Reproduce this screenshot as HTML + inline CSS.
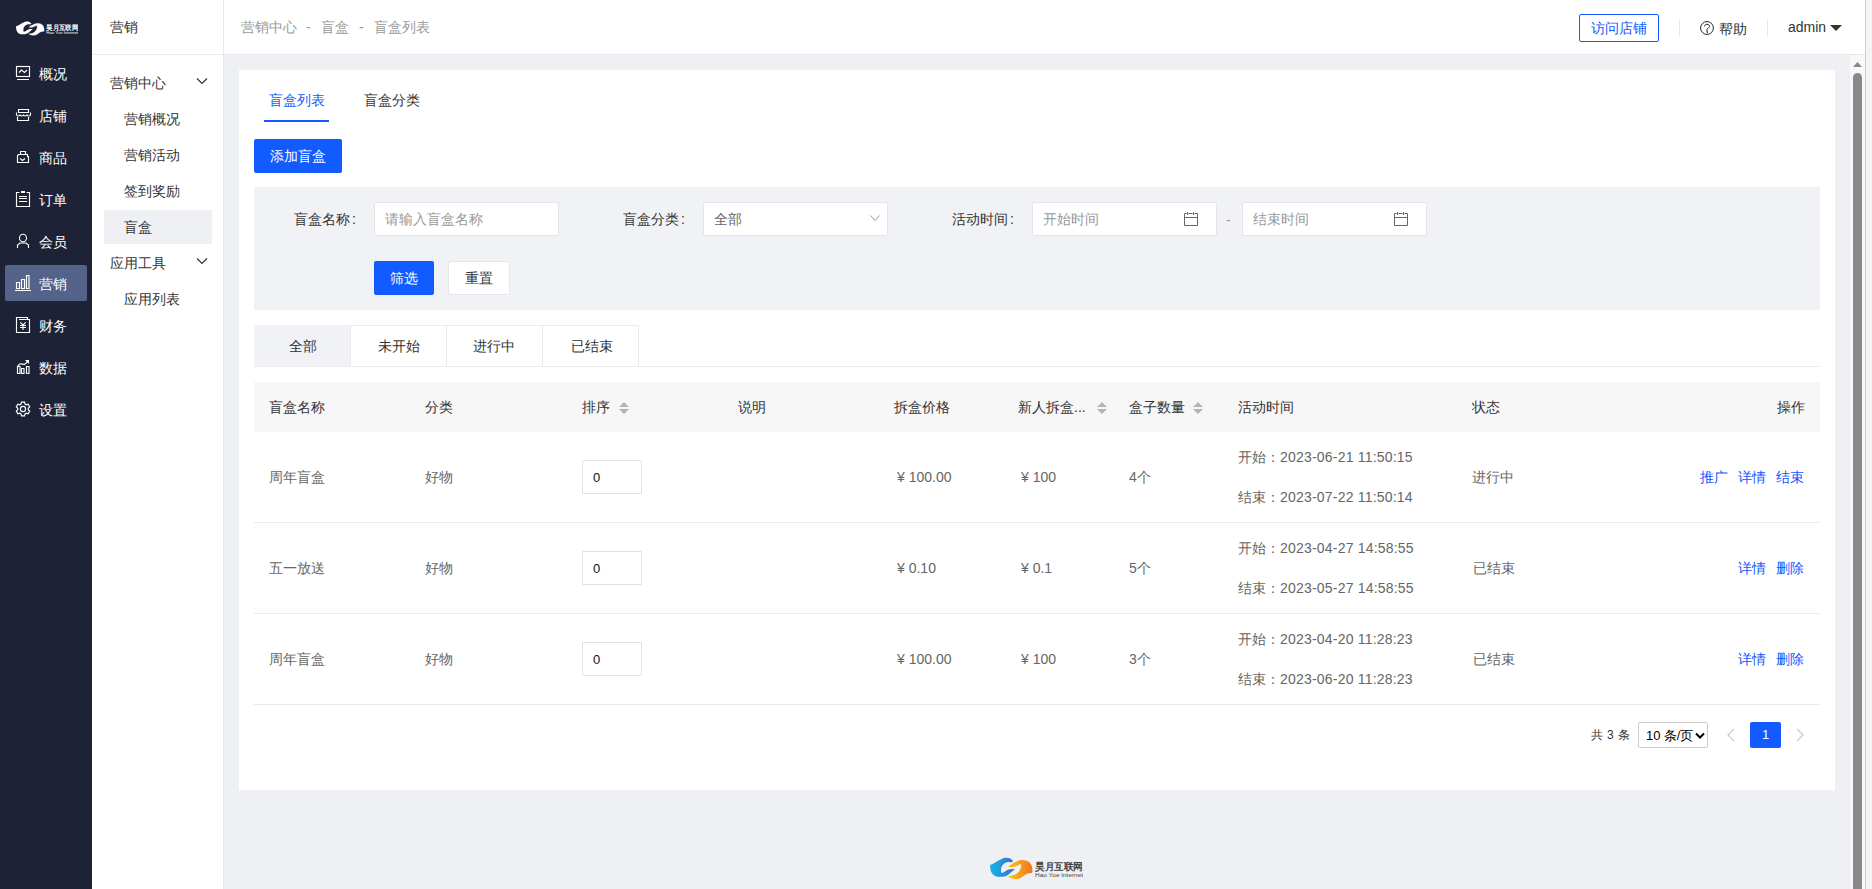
<!DOCTYPE html>
<html><head><meta charset="utf-8">
<style>
*{box-sizing:border-box;margin:0;padding:0}
html,body{width:1872px;height:889px;overflow:hidden;background:#eef0f4;font-family:"Liberation Sans",sans-serif;font-size:14px;color:#333}
.abs{position:absolute}
#side{position:absolute;left:0;top:0;width:92px;height:889px;background:#1d2236}
#side .it{position:absolute;left:5px;width:82px;height:35px;color:#fff;font-size:14px}
#side .it span{position:absolute;left:34px;top:8px;line-height:18px;white-space:nowrap}
#side .it svg{position:absolute;left:11px;top:10px}
#side .it.on{background:#5a6a8c;border-radius:3px}
#sub{position:absolute;left:92px;top:0;width:132px;height:889px;background:#fff;border-right:1px solid #e8e8e8}
#sub .t{position:absolute;white-space:nowrap;line-height:18px}
#hdr{position:absolute;left:224px;top:0;width:1641px;height:55px;background:#fff;border-bottom:1px solid #e8e8e8}
#subhdr{position:absolute;left:92px;top:54px;width:131px;height:1px;background:#e8e8e8}
.t{position:absolute;white-space:nowrap;line-height:18px}
#card{position:absolute;left:239px;top:70px;width:1596px;height:720px;background:#fff}
.btn{position:absolute;border-radius:2px;text-align:center;line-height:34px;height:34px}
.blue{background:#125bff;color:#fff}
.inp{position:absolute;background:#fff;border:1px solid #e5e5e5;border-radius:1px;height:34px;width:185px}
.ph{color:#999}
</style></head><body>
<div id="side">
<svg class="abs" style="left:16px;top:21px" width="62.31" height="15.41" viewBox="5 5 93 23">
<path d="M5 13 C8 12 12 9 16.2 7.2 C18 6 20 5.8 21.5 5.8 C24 5.8 26.5 6.5 28.1 9.2 L25.9 10.4 C24 9.6 22 9.8 20 11 C17.5 12.5 16 15 16 18 C16 20 16.5 21 17 21 C18.5 20.8 20.5 19 23.4 17.6 C25.5 16.8 28 16.8 29.9 17.3 C28 18.5 25 21.5 23 23 C21 24.3 18.5 24.8 15 24.8 C11.5 24.8 9 24 7.5 22 C5.8 20 5 17 5 13Z" fill="#fff"/><path d="M23.2 14.4 C25 13 28.5 10.5 31.7 9.4 C33.5 8.5 35 8.1 37 8.1 C40 8.1 43.5 9 45.5 11.5 C47 13.5 47.5 16.5 47.5 19.4 L46.8 20.9 C45 21 43.5 21.2 42.5 21.5 C40.5 22.5 38 24.5 35.5 26 C34 26.8 32 27 30.6 27 C28.5 27 26 26.3 23 24.5 C25 23.8 28 23.3 29.9 22.7 C32 21.8 34 20 35.2 17.5 C36 15.5 36.5 14 36 12.8 C35.5 12 34.5 12.2 33.1 13.3 C31 14.5 29 15.3 26.6 15.2 C25.5 15.1 24.3 14.8 23.2 14.4Z" fill="#fff" stroke="#1d2236" stroke-width="0.7"/>
<text x="50" y="18.2" font-size="10.2" font-weight="bold" fill="#fff" font-family="Liberation Sans" textLength="48" lengthAdjust="spacingAndGlyphs">昊月互联网</text>
<text x="50" y="25" font-size="6.2" fill="#fff" font-family="Liberation Sans" textLength="48" lengthAdjust="spacingAndGlyphs">Hao Yue Internet</text></svg>
<div class="abs" style="left:5px;top:265px;width:82px;height:36px;background:#54638a;border-radius:2px"></div>
<svg class="abs" style="left:12px;top:62px" width="24" height="24" viewBox="0 0 24 24" fill="none" stroke="#fff" stroke-width="1.15"><rect x="4.5" y="4.5" width="13" height="10"/><path d="M5 17.5h12M7 10.5l2.5-2.5 3 2.5 2.5-2.5"/></svg>
<div class="t" style="left:39px;top:65px;color:#fff">概况</div>
<svg class="abs" style="left:12px;top:104px" width="24" height="24" viewBox="0 0 24 24" fill="none" stroke="#fff" stroke-width="1.15"><path d="M6.5 5.5h10v3h-10z M4.5 8.5v2c0 1 .8 1.5 1.5 1.5s2-.5 2-1.5c0 1 1 1.5 1.7 1.5s1.8-.5 1.8-1.5c0 1 1 1.5 1.7 1.5s1.8-.5 1.8-1.5c0 1 1 1.5 1.7 1.5s1.8-.5 1.8-1.5v-2 M5.5 13v3.5h11V13"/></svg>
<div class="t" style="left:39px;top:107px;color:#fff">店铺</div>
<svg class="abs" style="left:12px;top:146px" width="24" height="24" viewBox="0 0 24 24" fill="none" stroke="#fff" stroke-width="1.15"><path d="M8.5 8.5v-3h5v3 M5.5 16.5v-7l1-1h9v2h1v6z M8 12.5l2.5 2 2.5-2"/></svg>
<div class="t" style="left:39px;top:149px;color:#fff">商品</div>
<svg class="abs" style="left:12px;top:188px" width="24" height="24" viewBox="0 0 24 24" fill="none" stroke="#fff" stroke-width="1.15"><path d="M7.5 4.5h-3v14h13v-14h-3 M7 8.5h8M7 10.5h8M7 13.5h8"/><rect x="9" y="3" width="4" height="2" fill="#fff" stroke="none"/></svg>
<div class="t" style="left:39px;top:191px;color:#fff">订单</div>
<svg class="abs" style="left:12px;top:230px" width="24" height="24" viewBox="0 0 24 24" fill="none" stroke="#fff" stroke-width="1.15"><ellipse cx="11" cy="8" rx="3.5" ry="3.8"/><path d="M5.5 18v-3l2.5-2h6l2.5 2v3"/></svg>
<div class="t" style="left:39px;top:233px;color:#fff">会员</div>
<svg class="abs" style="left:12px;top:272px" width="24" height="24" viewBox="0 0 24 24" fill="none" stroke="#fff" stroke-width="1.15"><path d="M4.5 10.5h3v6h-3z M9.5 7.5h3v9h-3z M14.5 3.5h2.5v13h-2.5z M3 18.5h16"/></svg>
<div class="t" style="left:39px;top:275px;color:#fff">营销</div>
<svg class="abs" style="left:12px;top:314px" width="24" height="24" viewBox="0 0 24 24" fill="none" stroke="#fff" stroke-width="1.15"><path d="M4.5 18.5v-15h11v2h2v13z M7 5.5h8.5 M8.3 8.3l2.7 2.7 2.7-2.7 M11 11v5 M8 11.5h6 M8 13.5h6"/></svg>
<div class="t" style="left:39px;top:317px;color:#fff">财务</div>
<svg class="abs" style="left:12px;top:356px" width="24" height="24" viewBox="0 0 24 24" fill="none" stroke="#fff" stroke-width="1.15"><path d="M5.5 17.5v-7h2.5v7z M9.5 17.5v-5h2.5v5z M14.5 17.5v-7h2.5v7z M5.7 10l2.4-2.2 2.2.3 2.4.3 3.5-3.4"/><path d="M13 4h4v4z" fill="#fff" stroke="none"/></svg>
<div class="t" style="left:39px;top:359px;color:#fff">数据</div>
<svg class="abs" style="left:12px;top:398px" width="24" height="24" viewBox="0 0 24 24" fill="none" stroke="#fff" stroke-width="1.15"><path d="M9.01 6.09 L9.43 4.18 L12.57 4.18 L12.99 6.09 L14.26 6.82 L16.12 6.23 L17.69 8.95 L16.25 10.26 L16.25 11.74 L17.69 13.05 L16.12 15.77 L14.26 15.18 L12.99 15.91 L12.57 17.82 L9.43 17.82 L9.01 15.91 L7.74 15.18 L5.88 15.77 L4.31 13.05 L5.75 11.74 L5.75 10.26 L4.31 8.95 L5.88 6.23 L7.74 6.82Z"/><circle cx="11" cy="11" r="2.6"/></svg>
<div class="t" style="left:39px;top:401px;color:#fff">设置</div>
</div>
<div id="sub">
  <div class="t" style="left:18px;top:18px">营销</div>
  <div class="t" style="left:18px;top:74px">营销中心</div>
  <svg class="abs" style="left:104px;top:77px" width="12" height="8" viewBox="0 0 12 8" fill="none" stroke="#333" stroke-width="1.2"><path d="M1 1.5l5 5 5-5"/></svg>
  <div class="t" style="left:32px;top:110px">营销概况</div>
  <div class="t" style="left:32px;top:146px">营销活动</div>
  <div class="t" style="left:32px;top:182px">签到奖励</div>
  <div class="abs" style="left:12px;top:210px;width:108px;height:34px;background:#eef0f4"></div>
  <div class="t" style="left:32px;top:218px">盲盒</div>
  <div class="t" style="left:18px;top:254px">应用工具</div>
  <svg class="abs" style="left:104px;top:257px" width="12" height="8" viewBox="0 0 12 8" fill="none" stroke="#333" stroke-width="1.2"><path d="M1 1.5l5 5 5-5"/></svg>
  <div class="t" style="left:32px;top:290px">应用列表</div>
</div>
<div id="subhdr"></div>

<div id="hdr">
  <div class="t" style="left:17px;top:18px;color:#999">营销中心</div><div class="t" style="left:82px;top:18px;color:#999">-</div><div class="t" style="left:97px;top:18px;color:#999">盲盒</div><div class="t" style="left:135px;top:18px;color:#999">-</div><div class="t" style="left:150px;top:18px;color:#999">盲盒列表</div>
  <div class="abs" style="left:1355px;top:14px;width:80px;height:28px;border:1px solid #125bff;border-radius:2px;color:#125bff;text-align:center;line-height:26px">访问店铺</div>
  <div class="abs" style="left:1455px;top:20px;width:1px;height:16px;background:#e8e8e8"></div>
  <svg class="abs" style="left:1476px;top:21px" width="15" height="15" viewBox="0 0 15 15" fill="none" stroke="#222" stroke-width="1"><circle cx="7" cy="7" r="6.4"/><path d="M4.3 5.5 C4.5 4 5.8 3.3 7 3.3 C8.5 3.3 9.6 4.2 9.6 5.4 C9.6 6.6 7.2 7 7 8.5 V11.3 H8"/></svg>
  <div class="t" style="left:1495px;top:20px">帮助</div>
  <div class="abs" style="left:1543px;top:20px;width:1px;height:16px;background:#e8e8e8"></div>
  <div class="t" style="left:1564px;top:18px">admin</div>
  <svg class="abs" style="left:1606px;top:25px" width="12" height="7" viewBox="0 0 12 7"><path d="M0 0h12L6 6z" fill="#333"/></svg>
</div>

<!-- scrollbars -->
<div class="abs" style="left:1850px;top:55px;width:15px;height:834px;background:#f8f8f8"></div>
<svg class="abs" style="left:1850px;top:58px" width="15" height="12" viewBox="0 0 15 12"><path d="M3 9h9L7.5 4z" fill="#888"/></svg>
<div class="abs" style="left:1853px;top:73px;width:9px;height:820px;background:#888;border-radius:5px"></div>
<div class="abs" style="left:1865px;top:0;width:1px;height:889px;background:#cfcfcf"></div>
<div class="abs" style="left:1866px;top:0;width:6px;height:889px;background:#f4f4f4"></div>

<div id="card">
  <div class="t" style="left:30px;top:21px;color:#125bff">盲盒列表</div>
  <div class="abs" style="left:25px;top:50px;width:65px;height:2px;background:#125bff"></div>
  <div class="t" style="left:125px;top:21px">盲盒分类</div>
  <div class="btn blue" style="left:15px;top:69px;width:88px">添加盲盒</div>
  <div class="abs" style="left:15px;top:117px;width:1566px;height:123px;background:#f0f2f5">
    <div class="t" style="left:40px;top:23px">盲盒名称<span style="margin-left:2px">:</span></div>
    <div class="inp" style="left:120px;top:15px"><span class="t ph" style="left:10px;top:7px">请输入盲盒名称</span></div>
    <div class="t" style="left:369px;top:23px">盲盒分类<span style="margin-left:2px">:</span></div>
    <div class="inp" style="left:449px;top:15px"><span class="t" style="left:10px;top:7px;color:#666">全部</span>
      <svg class="abs" style="left:166px;top:12px" width="10" height="7" viewBox="0 0 10 7" fill="none" stroke="#999" stroke-width="1"><path d="M0.5 0.5l4.5 5 4.5-5"/></svg></div>
    <div class="t" style="left:698px;top:23px">活动时间<span style="margin-left:2px">:</span></div>
    <div class="inp" style="left:778px;top:15px"><span class="t ph" style="left:10px;top:7px">开始时间</span>
      <svg class="abs" style="left:151px;top:9px" width="15" height="15" viewBox="0 0 15 15" fill="none" stroke="#666" stroke-width="1"><path d="M0.5 1.5V13.5H13.5V1.5 M0.5 1.5H2.5 M4.5 1.5H8.5 M10.5 1.5H13.5 M3.5 0V3 M9.5 0V3 M0.5 5.5H13.5"/></svg></div>
    <div class="t" style="left:972px;top:24px;color:#999">-</div>
    <div class="inp" style="left:988px;top:15px"><span class="t ph" style="left:10px;top:7px">结束时间</span>
      <svg class="abs" style="left:151px;top:9px" width="15" height="15" viewBox="0 0 15 15" fill="none" stroke="#666" stroke-width="1"><path d="M0.5 1.5V13.5H13.5V1.5 M0.5 1.5H2.5 M4.5 1.5H8.5 M10.5 1.5H13.5 M3.5 0V3 M9.5 0V3 M0.5 5.5H13.5"/></svg></div>
    <div class="btn blue" style="left:120px;top:74px;width:60px">筛选</div>
    <div class="btn" style="left:194px;top:74px;width:62px;background:#fff;border:1px solid #e4e6ea;line-height:32px">重置</div>
  </div>
  <!-- status tabs -->
    <div class="abs" style="left:15px;top:255px;width:385px;height:42px;border:1px solid #ececec;border-bottom:none;background:#fff"></div>
  <div class="abs" style="left:15px;top:255px;width:96px;height:42px;background:#f0f2f5"></div>
  <div class="abs" style="left:111px;top:256px;width:1px;height:41px;background:#ececec"></div>
  <div class="abs" style="left:207px;top:256px;width:1px;height:41px;background:#ececec"></div>
  <div class="abs" style="left:303px;top:256px;width:1px;height:41px;background:#ececec"></div>
  <div class="t" style="left:50px;top:267px">全部</div>
  <div class="t" style="left:139px;top:267px">未开始</div>
  <div class="t" style="left:234px;top:267px">进行中</div>
  <div class="t" style="left:332px;top:267px">已结束</div>
<div class="abs" style="left:15px;top:296px;width:1566px;height:1px;background:#ececec"></div>
  <!-- table -->
  <div class="abs" style="left:15px;top:312px;width:1566px;height:50px;background:#f7f7f7"></div>
  <div class="t" style="left:30px;top:328px">盲盒名称</div>
<div class="t" style="left:186px;top:328px">分类</div>
<div class="t" style="left:343px;top:328px">排序</div>
<div class="t" style="left:499px;top:328px">说明</div>
<div class="t" style="left:655px;top:328px">拆盒价格</div>
<div class="t" style="left:779px;top:328px">新人拆盒...</div>
<div class="t" style="left:890px;top:328px">盒子数量</div>
<div class="t" style="left:999px;top:328px">活动时间</div>
<div class="t" style="left:1233px;top:328px">状态</div>
<div class="t" style="left:1538px;top:328px">操作</div>
<svg class="abs" style="left:380px;top:332px" width="10" height="12" viewBox="0 0 10 12"><path d="M0 5L5 0 10 5z M0 7h10L5 12z" fill="#b4b4b4"/></svg>
<svg class="abs" style="left:858px;top:332px" width="10" height="12" viewBox="0 0 10 12"><path d="M0 5L5 0 10 5z M0 7h10L5 12z" fill="#b4b4b4"/></svg>
<svg class="abs" style="left:954px;top:332px" width="10" height="12" viewBox="0 0 10 12"><path d="M0 5L5 0 10 5z M0 7h10L5 12z" fill="#b4b4b4"/></svg>
<div class="t" style="left:30px;top:398px;color:#666">周年盲盒</div>
<div class="t" style="left:186px;top:398px;color:#666">好物</div>
<div class="inp" style="left:343px;top:390px;width:60px;height:34px;border-color:#e3e3e3"><span class="t" style="left:10px;top:8px;color:#111;font-size:13px">0</span></div>
<div class="t" style="left:658px;top:398px;color:#666">¥ 100.00</div>
<div class="t" style="left:782px;top:398px;color:#666">¥ 100</div>
<div class="t" style="left:890px;top:398px;color:#666">4个</div>
<div class="t" style="left:999px;top:378px;color:#666">开始：<span style="letter-spacing:0.2px">2023-06-21 11:50:15</span></div>
<div class="t" style="left:999px;top:418px;color:#666">结束：<span style="letter-spacing:0.2px">2023-07-22 11:50:14</span></div>
<div class="t" style="left:1233px;top:398px;color:#666">进行中</div>
<div class="t" style="left:1537px;top:398px;color:#0f57ff">结束</div>
<div class="t" style="left:1499px;top:398px;color:#0f57ff">详情</div>
<div class="t" style="left:1461px;top:398px;color:#0f57ff">推广</div>
<div class="abs" style="left:15px;top:452px;width:1566px;height:1px;background:#ebebeb"></div>
<div class="t" style="left:30px;top:489px;color:#666">五一放送</div>
<div class="t" style="left:186px;top:489px;color:#666">好物</div>
<div class="inp" style="left:343px;top:481px;width:60px;height:34px;border-color:#e3e3e3"><span class="t" style="left:10px;top:8px;color:#111;font-size:13px">0</span></div>
<div class="t" style="left:658px;top:489px;color:#666">¥ 0.10</div>
<div class="t" style="left:782px;top:489px;color:#666">¥ 0.1</div>
<div class="t" style="left:890px;top:489px;color:#666">5个</div>
<div class="t" style="left:999px;top:469px;color:#666">开始：<span style="letter-spacing:0.2px">2023-04-27 14:58:55</span></div>
<div class="t" style="left:999px;top:509px;color:#666">结束：<span style="letter-spacing:0.2px">2023-05-27 14:58:55</span></div>
<div class="t" style="left:1234px;top:489px;color:#666">已结束</div>
<div class="t" style="left:1537px;top:489px;color:#0f57ff">删除</div>
<div class="t" style="left:1499px;top:489px;color:#0f57ff">详情</div>
<div class="abs" style="left:15px;top:543px;width:1566px;height:1px;background:#ebebeb"></div>
<div class="t" style="left:30px;top:580px;color:#666">周年盲盒</div>
<div class="t" style="left:186px;top:580px;color:#666">好物</div>
<div class="inp" style="left:343px;top:572px;width:60px;height:34px;border-color:#e3e3e3"><span class="t" style="left:10px;top:8px;color:#111;font-size:13px">0</span></div>
<div class="t" style="left:658px;top:580px;color:#666">¥ 100.00</div>
<div class="t" style="left:782px;top:580px;color:#666">¥ 100</div>
<div class="t" style="left:890px;top:580px;color:#666">3个</div>
<div class="t" style="left:999px;top:560px;color:#666">开始：<span style="letter-spacing:0.2px">2023-04-20 11:28:23</span></div>
<div class="t" style="left:999px;top:600px;color:#666">结束：<span style="letter-spacing:0.2px">2023-06-20 11:28:23</span></div>
<div class="t" style="left:1234px;top:580px;color:#666">已结束</div>
<div class="t" style="left:1537px;top:580px;color:#0f57ff">删除</div>
<div class="t" style="left:1499px;top:580px;color:#0f57ff">详情</div>
<div class="abs" style="left:15px;top:634px;width:1566px;height:1px;background:#ebebeb"></div>
<div class="t" style="left:1352px;top:656px;font-size:12px;letter-spacing:0.3px">共 3 条</div>
<div class="abs" style="left:1399px;top:652px;width:70px;height:26px;border:1px solid #ccc;border-radius:2px;background:#fff"><span class="t" style="left:7px;top:4px;color:#000;font-size:13px">10 <span style="font-size:12.5px;letter-spacing:-0.4px">条/页</span></span><svg class="abs" style="left:56px;top:9px" width="10" height="8" viewBox="0 0 10 8"><path d="M1 1.5l4 4 4-4" fill="none" stroke="#000" stroke-width="2"/></svg></div>
<svg class="abs" style="left:1487px;top:658px" width="10" height="14" viewBox="0 0 10 14"><path d="M8 1L2 7l6 6" fill="none" stroke="#ccc" stroke-width="1.2"/></svg>
<div class="abs" style="left:1511px;top:652px;width:31px;height:26px;background:#125bff;border-radius:2px;color:#fff;text-align:center;line-height:26px;font-size:13px">1</div>
<svg class="abs" style="left:1556px;top:658px" width="10" height="14" viewBox="0 0 10 14"><path d="M2 1l6 6-6 6" fill="none" stroke="#ccc" stroke-width="1.2"/></svg>

</div>

<svg width="0" height="0" style="position:absolute"><defs><linearGradient id="gb" x1="0" x2="1"><stop offset="0" stop-color="#15b4ec"/><stop offset="1" stop-color="#3d6fc2"/></linearGradient>
<linearGradient id="go" x1="0" x2="1"><stop offset="0" stop-color="#ffc60a"/><stop offset="1" stop-color="#ef7422"/></linearGradient></defs></svg><svg class="abs" style="left:990px;top:857px" width="93.00" height="23.00" viewBox="5 5 93 23">
<path d="M5 13 C8 12 12 9 16.2 7.2 C18 6 20 5.8 21.5 5.8 C24 5.8 26.5 6.5 28.1 9.2 L25.9 10.4 C24 9.6 22 9.8 20 11 C17.5 12.5 16 15 16 18 C16 20 16.5 21 17 21 C18.5 20.8 20.5 19 23.4 17.6 C25.5 16.8 28 16.8 29.9 17.3 C28 18.5 25 21.5 23 23 C21 24.3 18.5 24.8 15 24.8 C11.5 24.8 9 24 7.5 22 C5.8 20 5 17 5 13Z" fill="url(#gb)"/><path d="M23.2 14.4 C25 13 28.5 10.5 31.7 9.4 C33.5 8.5 35 8.1 37 8.1 C40 8.1 43.5 9 45.5 11.5 C47 13.5 47.5 16.5 47.5 19.4 L46.8 20.9 C45 21 43.5 21.2 42.5 21.5 C40.5 22.5 38 24.5 35.5 26 C34 26.8 32 27 30.6 27 C28.5 27 26 26.3 23 24.5 C25 23.8 28 23.3 29.9 22.7 C32 21.8 34 20 35.2 17.5 C36 15.5 36.5 14 36 12.8 C35.5 12 34.5 12.2 33.1 13.3 C31 14.5 29 15.3 26.6 15.2 C25.5 15.1 24.3 14.8 23.2 14.4Z" fill="url(#go)"/>
<text x="50" y="18.2" font-size="10.2" font-weight="bold" fill="#444" font-family="Liberation Sans" textLength="48" lengthAdjust="spacingAndGlyphs">昊月互联网</text>
<text x="50" y="25" font-size="6.2" fill="#444" font-family="Liberation Sans" textLength="48" lengthAdjust="spacingAndGlyphs">Hao Yue Internet</text></svg>
</body></html>
